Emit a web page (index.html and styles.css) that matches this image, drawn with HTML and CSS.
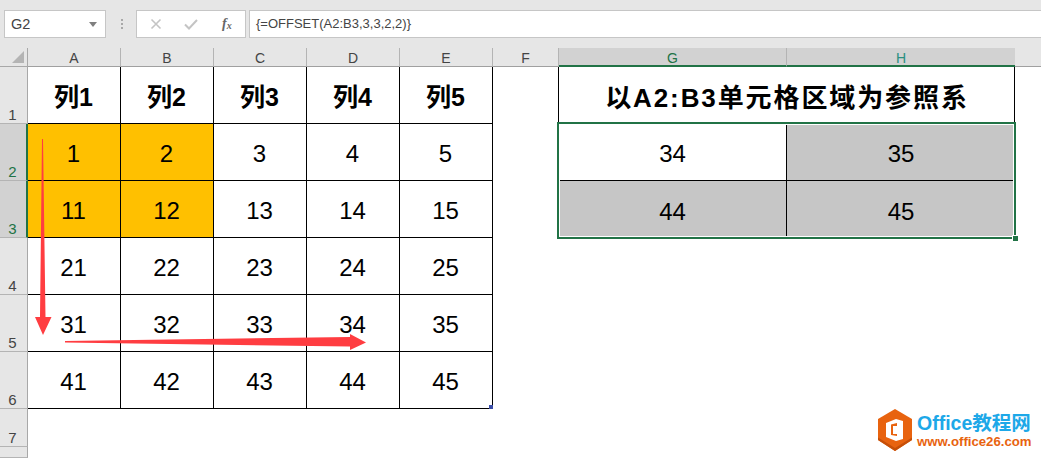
FILE: index.html
```html
<!DOCTYPE html>
<html lang="zh-CN">
<head>
<meta charset="utf-8">
<title>OFFSET</title>
<link rel="stylesheet" href="styles.css">
</head>
<body>
<div class="app">
  <div class="formula-bar">
    <div class="name-box"><span>G2</span><svg class="caret" width="8" height="5" viewBox="0 0 8 5"><path d="M0 0h8L4 5z" fill="#7f7f7f"/></svg></div>
    <div class="dots"><i></i><i></i><i></i></div>
    <div class="fx-box">
      <svg width="12" height="12" viewBox="0 0 12 12"><path d="M1.500 1.500l9 9M10.500 1.500l-9 9" stroke="#c4c4c4" stroke-width="1.600" fill="none"/></svg>
      <svg width="14" height="12" viewBox="0 0 14 12"><path d="M1 6.500l4 4L13 2" stroke="#c4c4c4" stroke-width="2" fill="none"/></svg>
      <span class="fx">f<sub>x</sub></span>
    </div>
    <div class="formula">{=OFFSET(A2:B3,3,3,2,2)}</div>
  </div>
  <div class="sheet">
    <div class="corner"><svg width="12" height="12" viewBox="0 0 12 12"><path d="M12 0v12H0z" fill="#b4b4b4"/></svg></div>
    <div class="ch">A</div><div class="ch">B</div><div class="ch">C</div><div class="ch">D</div><div class="ch">E</div><div class="ch">F</div>
    <div class="ch on g">G</div><div class="ch on h">H</div><div class="ch-rest"></div>

    <div class="rh">1</div>
    <div class="c b">列1</div><div class="c b">列2</div><div class="c b">列3</div><div class="c b">列4</div><div class="c b">列5</div><div class="gap"></div>
    <div class="title">以A2:B3单元格区域为参照系</div><div class="rest"></div>

    <div class="rh on">2</div>
    <div class="c y">1</div><div class="c y">2</div><div class="c">3</div><div class="c">4</div><div class="c">5</div><div class="gap"></div>
    <div class="sel">
      <div class="s s-w">34</div><div class="s s-g">35</div>
      <div class="s s-g s-last">44</div><div class="s s-g s-last">45</div>
      <div class="sel-frame"></div><div class="sel-handle"></div>
    </div>
    <div class="rest"></div>

    <div class="rh on">3</div>
    <div class="c y">11</div><div class="c y">12</div><div class="c">13</div><div class="c">14</div><div class="c">15</div><div class="gap"></div><div class="rest"></div>

    <div class="rh">4</div>
    <div class="c">21</div><div class="c">22</div><div class="c">23</div><div class="c">24</div><div class="c">25</div><div class="wide"></div>

    <div class="rh">5</div>
    <div class="c">31</div><div class="c">32</div><div class="c">33</div><div class="c">34</div><div class="c">35</div><div class="wide"></div>

    <div class="rh">6</div>
    <div class="c">41</div><div class="c">42</div><div class="c">43</div><div class="c">44</div><div class="c mark">45</div><div class="wide"></div>

    <div class="rh">7</div><div class="blank"></div>
    <div class="rh"></div><div class="blank"></div>

    <svg class="arrows" width="1041" height="410" viewBox="0 48 1041 410">
      <path d="M42 139H43L45.500 317H51.500L43 335L35 317H40z" fill="#ff3d41"/>
      <path d="M65 341L350 337V334L366 342.500L350 350V346.500L65 342.500z" fill="#ff3d41"/>
    </svg>
  </div>
  <div class="logo">
    <svg width="38" height="44" viewBox="0 0 38 44">
      <path d="M19 1L36 11V32L19 43L2 32V11z" fill="#e8630f"/>
      <path d="M19 40L36 29.500V32L19 43L2 32V29.500z" fill="#c64f08"/>
      <path d="M20 11L10 15V29L20 33L27 31V13z" fill="#fff"/>
      <path d="M15 16.500L21 15V28L15 27z" fill="#e8630f"/>
      <path d="M17 18H21V26H17z" fill="#fff"/>
    </svg>
    <div class="logo-text">
      <div class="logo-a">Office教程网</div>
      <div class="logo-b">www.office26.com</div>
    </div>
  </div>
</div>
</body>
</html>
```
FILE: styles.css
```css
* { box-sizing: border-box; }
html, body { margin: 0; padding: 0; }
body { background: #fff; font-family: "Liberation Sans", "Noto Sans CJK SC", sans-serif; color: #000; }
.app { position: relative; width: 1041px; height: 458px; overflow: hidden; }

.formula-bar { height: 48px; background: #e6e6e6; display: flex; align-items: flex-start; padding: 10px 0 0 4px; }
.name-box { width: 102px; height: 28px; background: #fff; border: 1px solid #c6c6c6; display: flex; align-items: center; justify-content: space-between; padding: 0 8px 0 6px; font-size: 14.500px; color: #444; }
.dots { width: 30px; height: 28px; display: flex; flex-direction: column; align-items: center; justify-content: center; gap: 2px; padding-left: 1px; }
.dots i { width: 2px; height: 2px; background: #a8a8a8; display: block; }
.fx-box { width: 110px; height: 28px; background: #fff; border: 1px solid #c6c6c6; display: flex; align-items: center; gap: 22px; padding-left: 13px; }
.fx { font: italic bold 14px "Liberation Serif", serif; color: #666; margin-left: 2px; }
.fx sub { font-size: 10px; vertical-align: -1px; line-height: 0; }
.formula { flex: 1; height: 28px; margin-left: 3px; background: #fff; border: 1px solid #c6c6c6; border-right: 0; padding: 0 0 0 6px; font-size: 13px; line-height: 26px; color: #444; }

.sheet { position: relative; display: grid; grid-template-columns: 28px repeat(5, 93px) 66px 228px 228px 26px; grid-template-rows: 19px repeat(6, 57px) 38px 11px; }
.corner { background: #e6e6e6; border-right: 1px solid #a8a8a8; border-bottom: 1px solid #a8a8a8; display: flex; align-items: flex-end; justify-content: flex-end; padding: 0 3px 3px 0; }
.ch { background: #e6e6e6; border-right: 1px solid #b4b4b4; border-bottom: 1px solid #a0a0a0; font-size: 14px; line-height: 19px; text-align: center; color: #444; padding-top: 1px; }
.ch.on { background: #d2d2d2; border-bottom: 2px solid #217346; }
.ch.g { color: #217346; }
.ch.h { color: #2b8f80; border-right: 0; }
.ch-rest { background: #e6e6e6; border-bottom: 1px solid #a0a0a0; }
.rh { grid-column: 1; background: #e6e6e6; border-right: 1px solid #a8a8a8; border-bottom: 1px solid #b4b4b4; font-size: 15px; color: #444; padding: 0 2px 0 0; display: flex; align-items: flex-end; justify-content: center; line-height: 16px; }
.rh.on { background: #d2d2d2; border-right: 2px solid #217346; color: #217346; padding-right: 1px; }
.c { border-right: 1px solid #000; border-bottom: 1px solid #000; font-size: 24px; display: flex; align-items: center; justify-content: center; padding: 4px 1px 0 0; }
.c.b { font-weight: 700; font-size: 25px; padding: 0 1px 0 0; }
.c.y { background: #ffc000; }
.c.mark { position: relative; }
.c.mark::after { content: ""; position: absolute; right: -1px; bottom: -1px; width: 4px; height: 4px; background: #3b4ea8; }
.gap { border-right: 1px solid #000; }
.rest { background: #fff; }
.wide { grid-column: 7 / 11; background: #fff; }
.blank { grid-column: 2 / 11; background: #fff; }
.title { grid-column: 8 / 10; border-right: 1px solid #000; font-weight: 700; font-size: 26px; letter-spacing: 1.900px; display: flex; align-items: center; justify-content: center; padding: 0 0 0 1px; }

.sel { grid-column: 8 / 10; grid-row: 3 / 5; position: relative; display: grid; grid-template-columns: 228px 228px; grid-template-rows: 57px 57px; }
.s { display: flex; align-items: center; justify-content: center; font-size: 24px; border-right: 1px solid #000; border-bottom: 1px solid #000; padding-top: 4px; }
.s-w { background: #fff; }
.s-g { background: #c6c6c6; }
.s:nth-child(even) { border-right: 0; }
.s-last { border-bottom: 0; }
.sel-frame { position: absolute; left: -2px; right: -1px; top: -2px; bottom: -1px; border: 2px solid #217346; box-shadow: inset 0 0 0 1px #fff; pointer-events: none; }
.sel-handle { position: absolute; right: -3px; bottom: -3px; width: 6px; height: 6px; background: #217346; border-left: 1px solid #fff; border-top: 1px solid #fff; }

.arrows { position: absolute; left: 0; top: 0; pointer-events: none; }

.logo { position: absolute; left: 876px; top: 408px; display: flex; gap: 3px; align-items: flex-start; width: 165px; background: #fff; }
.logo-text { display: flex; flex-direction: column; padding-top: 3px; }
.logo-a { font-size: 19.500px; font-weight: 700; line-height: 24px; color: #1da8e8; white-space: nowrap; }
.logo-b { font-size: 13.200px; font-weight: 700; line-height: 14px; color: #e8630f; white-space: nowrap; }
```
